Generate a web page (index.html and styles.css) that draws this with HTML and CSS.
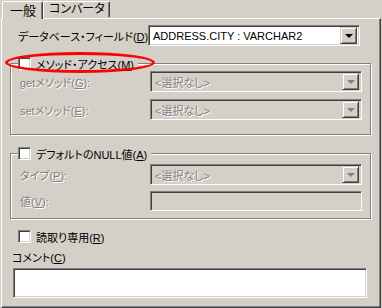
FILE: index.html
```html
<!DOCTYPE html>
<html lang="ja">
<head>
<meta charset="utf-8">
<link rel="stylesheet" href="styles.css">
</head>
<body>
<div class="window">
  <div class="tabs">
    <div class="tab active">一般</div>
    <div class="tab">コンバータ</div>
  </div>
  <div class="panel">
    <div class="row first">
      <label class="lbl">データベース・フィールド(<u>D</u>):</label>
      <div class="combo"><span class="val">ADDRESS.CITY : VARCHAR2</span><span class="btn"><span class="arrow"></span></span></div>
    </div>

    <fieldset class="group g1">
      <legend><span class="check"></span><span>メソッド・アクセス(<u>M</u>)</span></legend>
      <div class="row">
        <label class="lbl dis">getメソッド(<u>G</u>):</label>
        <div class="combo off"><span class="val">&lt;選択なし&gt;</span><span class="btn"><span class="arrow"></span></span></div>
      </div>
      <div class="row">
        <label class="lbl dis">setメソッド(<u>E</u>):</label>
        <div class="combo off"><span class="val">&lt;選択なし&gt;</span><span class="btn"><span class="arrow"></span></span></div>
      </div>
    </fieldset>

    <fieldset class="group g2">
      <legend><span class="check"></span><span>デフォルトのNULL値(<u>A</u>)</span></legend>
      <div class="row">
        <label class="lbl dis">タイプ(<u>P</u>):</label>
        <div class="combo off"><span class="val">&lt;選択なし&gt;</span><span class="btn"><span class="arrow"></span></span></div>
      </div>
      <div class="row">
        <label class="lbl dis">値(<u>V</u>):</label>
        <div class="field off"></div>
      </div>
    </fieldset>

    <div class="checkrow"><span class="check"></span><span>読取り専用(<u>R</u>)</span></div>
    <div class="cmt-label">コメント(<u>C</u>)</div>
    <div class="textarea"></div>
  </div>
  <div class="ellipse"></div>
</div>
</body>
</html>
```
FILE: styles.css
```css
* { box-sizing: border-box; }
html, body { margin: 0; padding: 0; }
body {
  width: 382px;
  height: 308px;
  background: #d4d0c8;
  font-family: "Liberation Sans", "Noto Sans CJK JP", sans-serif;
  font-size: 11px;
  font-feature-settings: "palt";
  color: #000;
  overflow: hidden;
}
u { text-decoration: underline; text-underline-offset: 1px; }
.window { position: relative; width: 382px; height: 308px; }

.tabs { display: flex; height: 18px; padding-left: 2px; align-items: flex-end; }
.tab {
  height: 16px;
  padding: 0 4px 0 5px;
  line-height: 15px;
  font-size: 12px;
  border-top: 1px solid #fff;
  border-left: 1px solid #fff;
  border-right: 1px solid #404040;
  box-shadow: inset -1px 0 0 #808080;
  border-radius: 2px 2px 0 0;
  margin-bottom: 1px;
}
.tab.active {
  height: 18px;
  margin-bottom: -1px;
  position: relative;
  z-index: 1;
  background: #d4d0c8;
  padding: 0 6px 0 7px;
  font-size: 13px;
  line-height: 17px;
}

.panel {
  margin-left: 1px;
  width: 380px;
  height: 290px;
  border-top: 1px solid #fff;
  border-left: 1px solid #fff;
  border-right: 1px solid #404040;
  border-bottom: 1px solid #404040;
  box-shadow: inset -1px -1px 0 #808080;
  padding: 6px 0 0 0;
}

.row { display: flex; align-items: center; height: 21px; }
.row.first { padding-left: 16px; }
.lbl { width: 130px; white-space: nowrap; }
.lbl.dis, .dis { color: #808080; text-shadow: 1px 1px 0 #fff; }

.combo {
  width: 212px;
  height: 21px;
  display: flex;
  align-items: center;
  background: #fff;
  border-top: 1px solid #808080;
  border-left: 1px solid #808080;
  border-right: 1px solid #fff;
  border-bottom: 1px solid #fff;
  box-shadow: inset 1px 1px 0 #404040, inset -1px -1px 0 #d4d0c8;
  padding: 2px 2px 2px 3px;
}
.combo.off { background: #d4d0c8; }
.combo .val { flex: 1; padding-left: 1px; white-space: nowrap; }
.combo.off .val { color: #808080; text-shadow: 1px 1px 0 #fff; }
.btn {
  width: 17px;
  height: 17px;
  background: #d4d0c8;
  border-top: 1px solid #d4d0c8;
  border-left: 1px solid #d4d0c8;
  border-right: 1px solid #404040;
  border-bottom: 1px solid #404040;
  box-shadow: inset 1px 1px 0 #fff, inset -1px -1px 0 #808080;
  display: flex;
  align-items: center;
  justify-content: center;
}
.arrow {
  width: 0; height: 0;
  border-left: 4px solid transparent;
  border-right: 4px solid transparent;
  border-top: 4px solid #000;
  margin-top: 1px;
}
.combo.off .arrow { border-top-color: #808080; }

.field {
  width: 212px;
  height: 20px;
  background: #d4d0c8;
  border-top: 1px solid #808080;
  border-left: 1px solid #808080;
  border-right: 1px solid #fff;
  border-bottom: 1px solid #fff;
  box-shadow: inset 1px 1px 0 #404040, inset -1px -1px 0 #d4d0c8;
}

.group {
  margin: 0 0 0 8px;
  width: 361px;
  padding: 0 0 0 9px;
  border: 1px solid #808080;
  box-shadow: inset 1px 1px 0 #fff, 1px 1px 0 #fff;
  min-width: 0;
}
.group legend {
  display: flex;
  align-items: center;
  gap: 5px;
  padding: 0 4px 0 0;
  margin-left: -2px;
  height: 13px;
  background: #d4d0c8;
  position: relative;
}
.g1 { margin-top: 11px; height: 78px; }
.g1 .row { margin-top: 1px; }
.g1 .row + .row { margin-top: 7px; }
.g2 { margin-top: 12px; height: 72px; }
.g2 .row { margin-top: 4px; }
.g2 .row + .row { margin-top: 6px; height: 20px; }

.check {
  display: inline-block;
  width: 13px;
  height: 13px;
  background: #fff;
  border-top: 1px solid #808080;
  border-left: 1px solid #808080;
  border-right: 1px solid #fff;
  border-bottom: 1px solid #fff;
  box-shadow: inset 1px 1px 0 #404040, inset -1px -1px 0 #d4d0c8;
  flex: none;
}

.checkrow {
  display: flex;
  align-items: center;
  gap: 5px;
  margin: 11px 0 0 16px;
  height: 13px;
}
.cmt-label { margin: 9px 0 0 10px; height: 13px; line-height: 13px; }
.textarea {
  margin: 3px 0 0 11px;
  width: 354px;
  height: 30px;
  background: #fff;
  border-top: 1px solid #808080;
  border-left: 1px solid #808080;
  border-right: 1px solid #fff;
  border-bottom: 1px solid #fff;
  box-shadow: inset 1px 1px 0 #404040, inset -1px -1px 0 #d4d0c8;
}

.ellipse {
  position: absolute;
  left: 5px;
  top: 52px;
  width: 150px;
  height: 21px;
  border: 3px solid #f00;
  border-radius: 50%;
  pointer-events: none;
}
```
